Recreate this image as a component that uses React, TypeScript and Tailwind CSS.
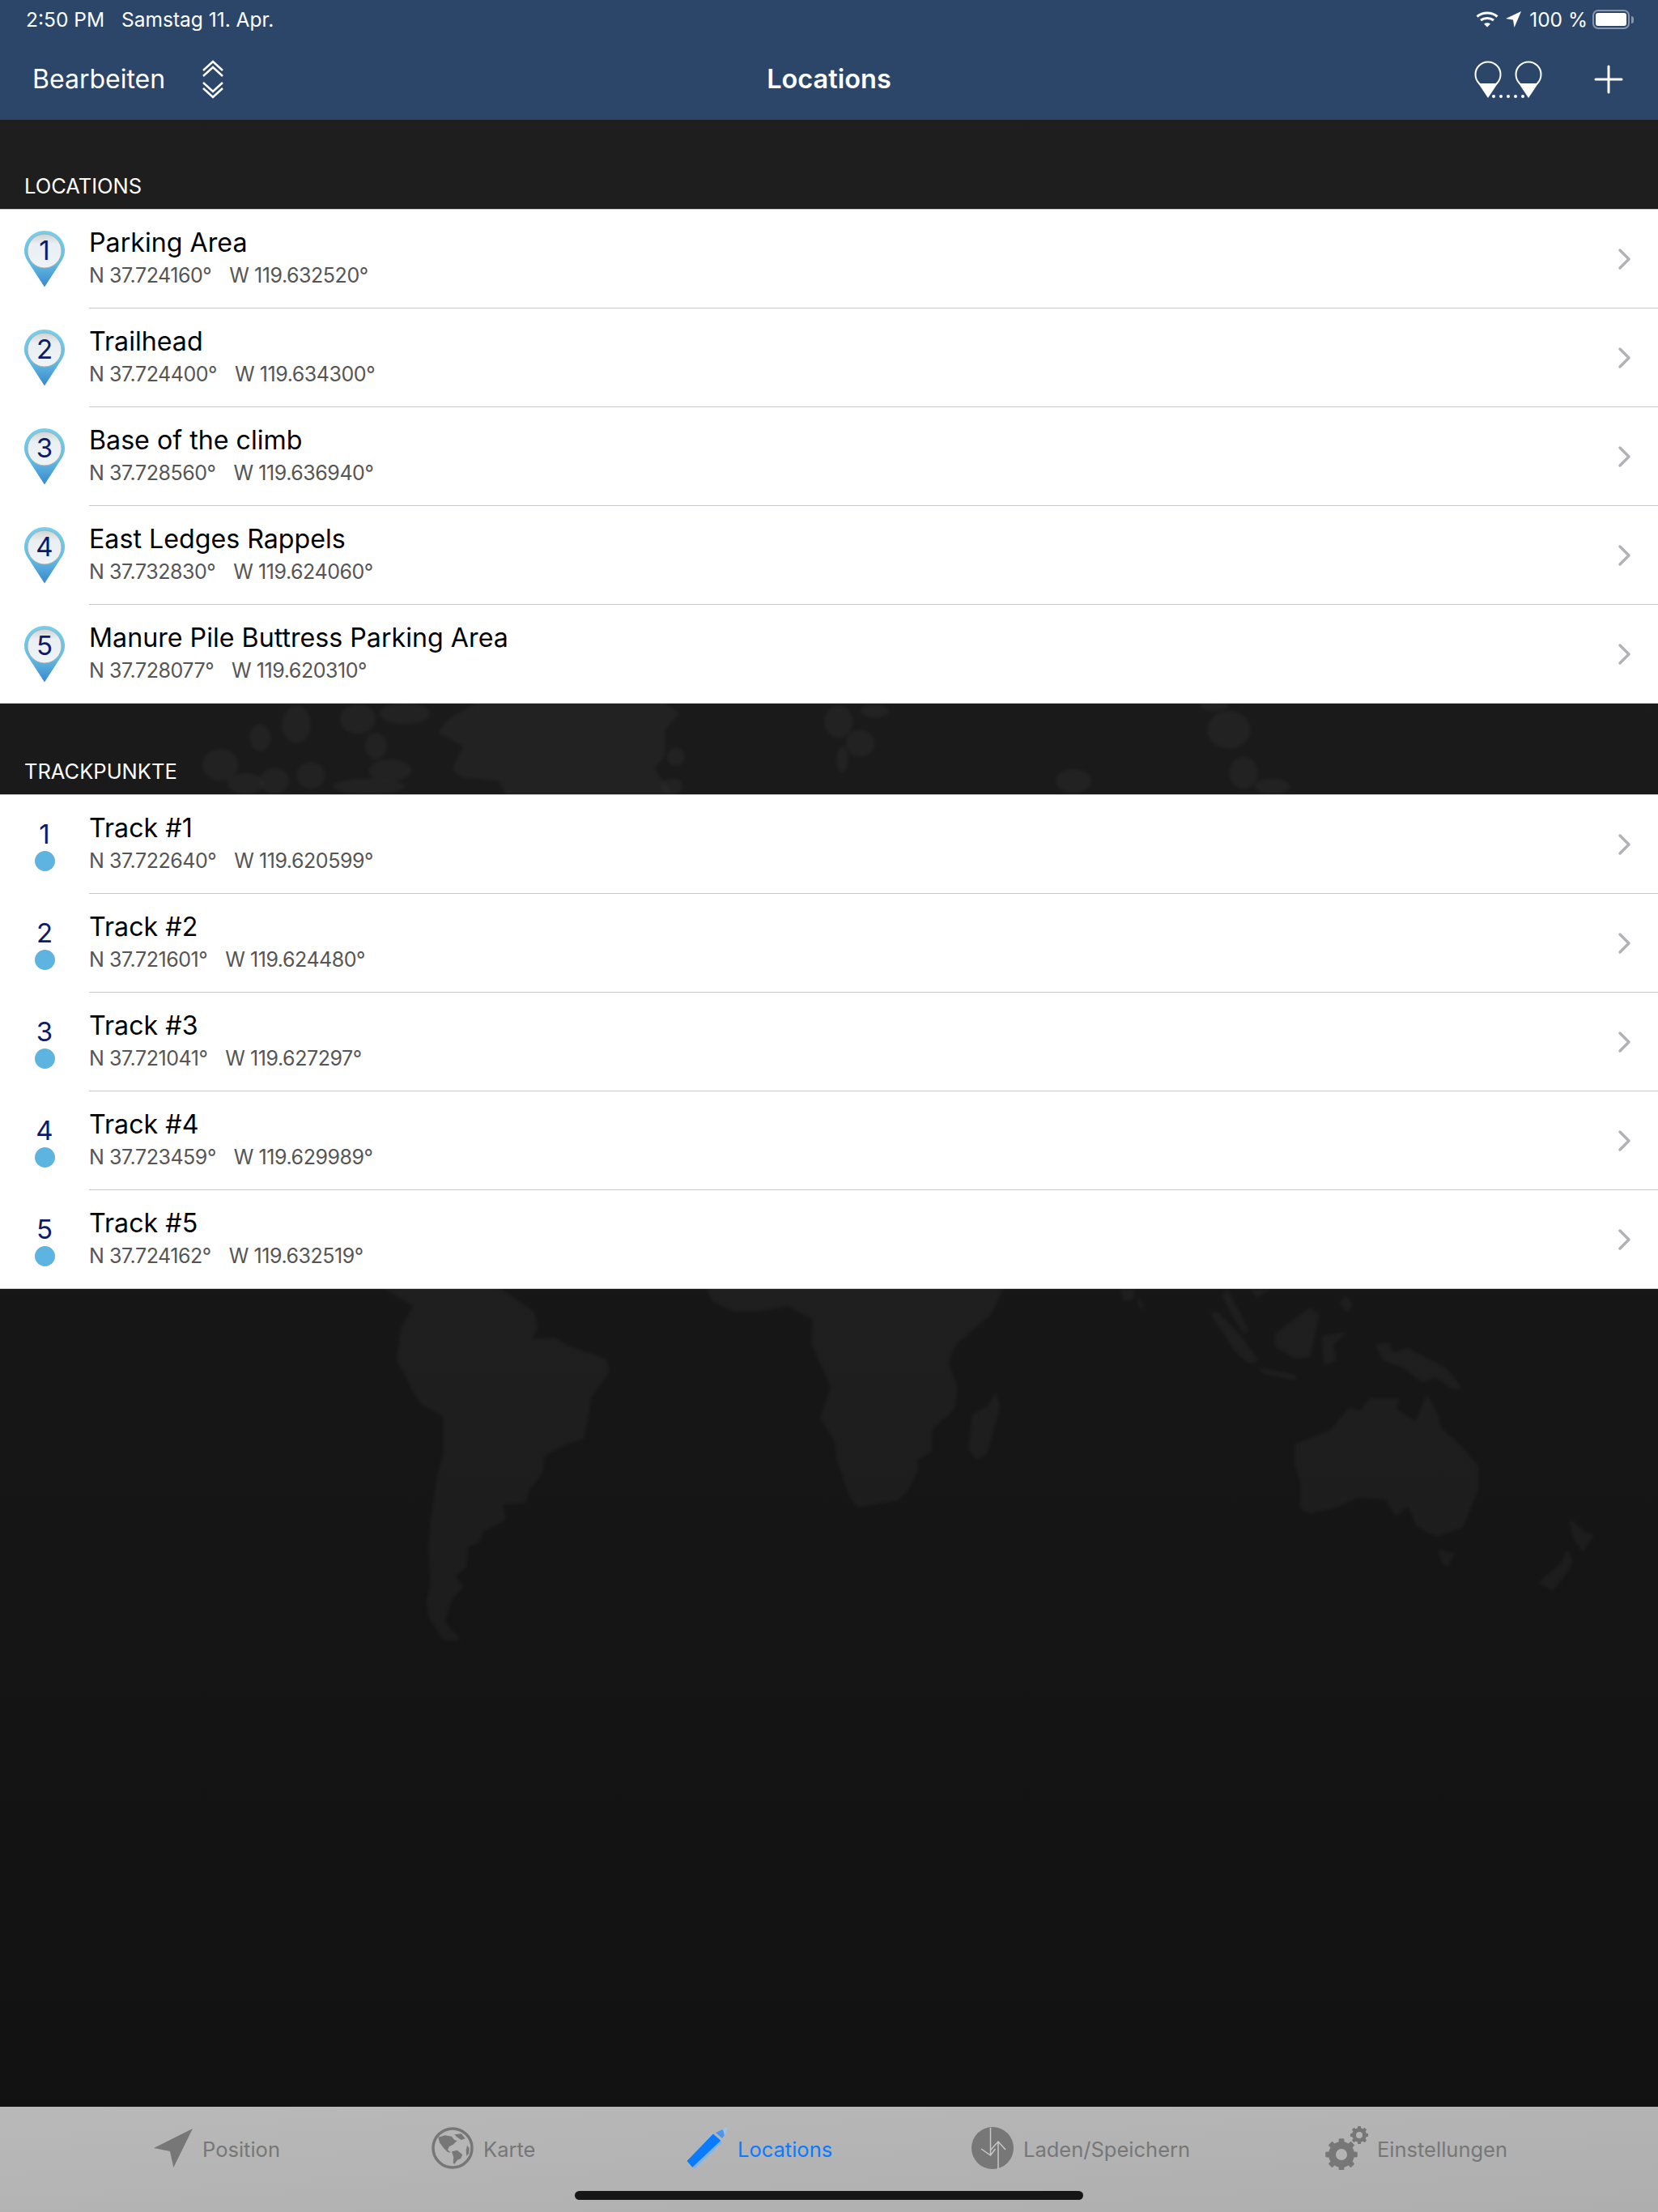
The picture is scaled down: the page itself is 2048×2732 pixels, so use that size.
const locations = [
  { name: 'Parking Area', lat: 'N 37.724160°', lon: 'W 119.632520°' },
  { name: 'Trailhead', lat: 'N 37.724400°', lon: 'W 119.634300°' },
  { name: 'Base of the climb', lat: 'N 37.728560°', lon: 'W 119.636940°' },
  { name: 'East Ledges Rappels', lat: 'N 37.732830°', lon: 'W 119.624060°' },
  { name: 'Manure Pile Buttress Parking Area', lat: 'N 37.728077°', lon: 'W 119.620310°' },
];

const tracks = [
  { name: 'Track #1', lat: 'N 37.722640°', lon: 'W 119.620599°' },
  { name: 'Track #2', lat: 'N 37.721601°', lon: 'W 119.624480°' },
  { name: 'Track #3', lat: 'N 37.721041°', lon: 'W 119.627297°' },
  { name: 'Track #4', lat: 'N 37.723459°', lon: 'W 119.629989°' },
  { name: 'Track #5', lat: 'N 37.724162°', lon: 'W 119.632519°' },
];

function WorldMap() {
  const blobs = [
    [80, 130, 15, 50], [25, 230, 25, 60], [130, 80, 20, 70], [215, 60, 25, 55], [280, 40, 35, 40],
    [240, 160, 15, 50], [260, 250, 30, 40], [100, 290, 20, 50], [150, 270, 20, 50], [230, 310, 50, 30],
    [60, 300, 25, 40], [880, 70, 20, 60], [910, 150, 20, 50], [930, 30, 20, 25], [885, 210, 8, 50],
    [1420, 100, 30, 70], [1440, 260, 20, 60], [1480, 310, 25, 30], [1205, 290, 25, 45], [1400, 10, 20, 20],
    [655, 200, 12, 35], [650, 310, 15, 30],
  ];
  return (
    <svg className="absolute inset-0 blur-[2px]" width="2048" height="2732" viewBox="0 0 2048 2732" fill="#ffffff" fillOpacity="0.035">
      {/* arctic, only seen in the gap between the two lists */}
      <g transform="translate(250 868) scale(0.893 0.3333)">
        <polygon points="380,0 640,0 660,40 640,100 640,200 625,240 650,340 420,340 410,290 360,280 345,250 360,160 325,110 340,60" />
        {blobs.map(([cx, cy, rx, ry], i) => (
          <ellipse key={i} cx={cx} cy={cy} rx={rx} ry={ry} />
        ))}
      </g>
      {/* south america, africa, madagascar */}
      <g transform="translate(440 1590) scale(0.523 0.3333)">
        <polygon points="60,0 340,0 420,90 430,150 415,190 470,185 500,215 590,265 600,310 555,410 540,560 500,580 445,625 440,690 410,750 400,800 345,805 355,860 300,905 290,950 265,960 260,1040 235,1070 255,1110 225,1160 210,1240 250,1310 205,1310 170,1220 165,1170 175,1100 170,960 175,870 190,700 205,620 205,480 150,430 95,270 105,150 135,70" />
        <polygon points="825,0 1530,0 1500,100 1415,215 1400,280 1420,370 1415,450 1360,530 1360,610 1325,640 1330,670 1305,750 1280,790 1185,815 1165,780 1135,640 1130,570 1095,485 1120,370 1075,210 1078,120 1020,70 950,90 890,90 840,50" />
        <polygon points="1510,390 1522,440 1490,620 1465,640 1445,600 1455,470 1490,440" />
      </g>
      {/* australia, indonesia, new zealand */}
      <g transform="translate(1240 1590) scale(0.4847 0.3333)">
        <polygon points="740,580 830,530 880,445 910,455 930,410 1010,410 1000,450 1050,495 1078,390 1110,480 1115,520 1160,580 1210,660 1210,750 1170,890 1100,925 1050,885 1030,810 1000,850 970,785 900,780 850,815 780,840 755,820 755,730 740,650" />
        <polygon points="1105,970 1150,985 1130,1040 1115,1020" />
        <polygon points="1440,850 1480,905 1505,915 1475,985 1450,930" />
        <polygon points="1435,970 1450,1010 1440,1050 1400,1125 1360,1095 1420,1020" />
        <polygon points="945,210 985,205 990,240 1030,225 1130,300 1170,380 1140,375 1100,335 1065,355 1020,300 965,270" />
        <polygon points="525,95 545,90 610,190 650,270 625,285 590,240" />
        <polygon points="555,30 570,5 625,160 610,170 580,100" />
        <polygon points="645,295 745,325 745,345 660,320" />
        <polygon points="690,170 780,75 805,100 780,260 740,265 690,220" />
        <polygon points="810,180 875,165 840,215 850,270 815,290" />
        <polygon points="870,30 890,60 875,95 855,60" />
        <polygon points="295,5 335,5 330,45 305,50" />
        <polygon points="340,30 358,70 345,85" />
        <polygon points="625,5 680,5 645,40" />
      </g>
    </svg>
  );
}

function PinIcon({ n }: { n: number }) {
  return (
    <div className="relative w-[50px] h-[70px]">
      <svg width="50" height="70" viewBox="0 0 50 70">
        <defs>
          <linearGradient id="pinBody" x1="0" y1="0" x2="0" y2="1">
            <stop offset="0" stopColor="#74d0ea" />
            <stop offset="0.55" stopColor="#62bfe6" />
            <stop offset="1" stopColor="#3c86cb" />
          </linearGradient>
          <linearGradient id="pinDisc" x1="0" y1="0" x2="0" y2="1">
            <stop offset="0" stopColor="#cfd3d4" />
            <stop offset="0.3" stopColor="#e9eff2" />
            <stop offset="1" stopColor="#eef3f6" />
          </linearGradient>
        </defs>
        <path d="M25 0C11.2 0 0 11 0 24.5c0 4.4 1.1 8 3.2 11.5L25 69.5 46.8 36C48.900 32.500 50 28.900 50 24.500 50 11 38.800 0 25 0Z" fill="url(#pinBody)" />
        <circle cx="25" cy="25" r="21" fill="url(#pinDisc)" stroke="#a9aeb1" strokeWidth="1" />
      </svg>
      <span className="absolute left-0 right-0 top-[2px] text-center text-[33px] leading-[44px] text-[#101a66]">{n}</span>
    </div>
  );
}

function TrackIcon({ n }: { n: number }) {
  return (
    <div className="flex flex-col items-center w-[50px]">
      <span className="text-[33px] leading-[40px] text-[#101a66]">{n}</span>
      <span className="mt-[1px] w-[25px] h-[25px] rounded-full bg-[#5db4e0]" />
    </div>
  );
}

function Row({ icon, name, lat, lon, last }: { icon: React.ReactNode; name: string; lat: string; lon: string; last: boolean }) {
  return (
    <div className={`flex bg-white ${last ? 'h-[121px]' : 'h-[122px]'}`}>
      <div className="w-[110px] shrink-0 flex justify-center items-center">{icon}</div>
      <div className={`flex-1 flex items-center pr-[32px] ${last ? '' : 'border-b border-[#c8c8cc]'}`}>
        <div className="flex-1 pb-[3px]">
          <div className="text-[32.2px] leading-[40px] text-black">{name}</div>
          <div className="flex gap-[22px] text-[25px] leading-[32px] mt-[4px] text-[#555555] tracking-[-0.45px]">
            <span>{lat}</span>
            <span>{lon}</span>
          </div>
        </div>
        <svg width="18" height="28" viewBox="0 0 18 28" fill="none" stroke="#b2b2b6" strokeWidth="3.500" strokeLinecap="round" strokeLinejoin="round">
          <path d="M3 3l11 11L3 25" />
        </svg>
      </div>
    </div>
  );
}

function Section({ title, top, children }: { title: string; top: string; children: React.ReactNode }) {
  return (
    <section>
      <div className={`${top} flex items-end pl-[30px] pb-[12px] border-b border-[#cfcfcf]`}>
        <span className="text-[25.5px] leading-[32px] text-white">{title}</span>
      </div>
      {children}
      <div className="h-px bg-[#cfcfcf]" />
    </section>
  );
}

function GlobeIcon() {
  return (
    <svg width="52" height="52" viewBox="0 0 52 52" fill="#777777">
      <circle cx="26" cy="26" r="24" fill="none" stroke="#777777" strokeWidth="3.500" />
      <polygon points="8.300,12.700 16.700,10.300 25,11.700 28.300,16 31.700,17 26.700,21.700 21.700,24.300 20,28.300 24,31.700 20,31 15,26 10,19.300" />
      <polygon points="28.300,9.300 36.700,8.300 41.700,14.300 36.700,16 31.700,12.700" />
      <polygon points="25,30.300 31.700,28.700 38.300,34.300 36,39 31.700,41 28.300,46 26.700,44.300 27.300,37.700" />
      <polygon points="44,22.700 46.700,26 46,32.700 43.300,36 42.700,29" />
    </svg>
  );
}

function PencilIcon() {
  return (
    <svg width="52" height="52" viewBox="0 0 52 52">
      <path d="M1 42L33 9l9 8L8 50z" fill="#0a7aff" stroke="#0a7aff" strokeLinejoin="round" />
      <path d="M42 17l2 2-34 33-3-2z" fill="#7db3f2" />
      <path d="M36 7l9-4 2 7-3 4z" fill="#4a95f0" />
      <path d="M45 3l6-3-4 10z" fill="#9cc4f5" />
    </svg>
  );
}

function TransferIcon() {
  return (
    <svg width="52" height="52" viewBox="0 0 52 52">
      <circle cx="26" cy="26" r="26" fill="#777777" />
      <path d="M23.500 1v34M12 27l11.500 8 6-8" fill="none" stroke="#c8c8c8" strokeWidth="1.500" />
      <path d="M33 52V18M24 28l9-10 9 10" fill="none" stroke="#c8c8c8" strokeWidth="1.500" />
    </svg>
  );
}

function Gear({ cx, cy, r, hole, teeth }: { cx: number; cy: number; r: number; hole: number; teeth: number }) {
  const marks = Array.from({ length: teeth }, (_, i) => (i * 360) / teeth);
  return (
    <g>
      {marks.map((a) => (
        <rect key={a} x={cx - r * 0.2} y={cy - r * 1.22} width={r * 0.4} height={r * 2.44} rx={r * 0.06} transform={`rotate(${a} ${cx} ${cy})`} />
      ))}
      <circle cx={cx} cy={cy} r={r} />
      <circle cx={cx} cy={cy} r={hole} fill="#b4b4b4" />
    </g>
  );
}

function GearsIcon() {
  return (
    <svg width="54" height="54" viewBox="0 0 54 54" fill="#777777">
      <Gear cx={20} cy={35} r={16} hole={7} teeth={8} />
      <Gear cx={42} cy={11} r={9} hole={4} teeth={8} />
    </svg>
  );
}

function Tab({ width, icon, label, active, gap }: { width: string; icon: React.ReactNode; label: string; active?: boolean; gap: string }) {
  return (
    <div className={`${width} ${gap} shrink-0 h-[54px] flex items-center`}>
      {icon}
      <span className={`mt-[4px] text-[25.5px] ${active ? 'text-[#0a7aff]' : 'text-[#777777]'}`}>{label}</span>
    </div>
  );
}

export default function App() {
  return (
    <div className="relative w-[2048px] h-[2732px] flex flex-col overflow-hidden bg-gradient-to-b from-[#1f1f1f] to-[#111111] font-['Inter',sans-serif]">
      <WorldMap />

      <header className="relative h-[148px] shrink-0 bg-[#2b4669] text-white">
        <div className="h-[48px] flex items-center justify-between pl-[32px] pr-[30px] text-[24.5px]">
          <div className="flex gap-[21px]">
            <span>2:50 PM</span>
            <span>Samstag 11. Apr.</span>
          </div>
          <div className="flex items-center">
            <svg width="28" height="20" viewBox="0 0 28 20" fill="none" stroke="#ffffff" strokeWidth="3">
              <path d="M1.500 6.500c7-6 18-6 25 0" />
              <path d="M6 11c4.500-3.500 11.500-3.500 16 0" />
              <path d="M14 19.500l-4-4c2.300-1.700 5.700-1.700 8 0z" fill="#ffffff" stroke="none" />
            </svg>
            <svg className="ml-[9px]" width="19" height="20" viewBox="0 0 19 20" fill="#ffffff">
              <path d="M19 0L0 9l9 1.500L10.500 20z" />
            </svg>
            <span className="ml-[10px]">100 %</span>
            <div className="ml-[6px] w-[46px] h-[24px] rounded-[7px] border-2 border-[#ffffff70] p-[2px]">
              <div className="w-full h-full rounded-[3px] bg-white" />
            </div>
            <div className="ml-[2px] w-[3px] h-[9px] rounded-r-full bg-[#ffffff70]" />
          </div>
        </div>
        <div className="relative h-[100px] flex items-center pl-[40px] pr-[43px]">
          <span className="text-[32px]">Bearbeiten</span>
          <svg className="ml-[46px]" width="26" height="48" viewBox="0 0 26 48" fill="none" stroke="#ffffff" strokeWidth="2.500">
            <path d="M1 13L13 2l12 11M1 20L13 9l12 11" />
            <path d="M1 28l12 11 12-11M1 35l12 11 12-11" />
          </svg>
          <span className="absolute left-0 right-0 text-center text-[32.5px] font-semibold">Locations</span>
          <svg className="ml-auto" width="84" height="46" viewBox="0 0 84 46">
            <g fill="none" stroke="#ffffff" strokeWidth="2">
              <circle cx="17" cy="17" r="15.500" />
              <circle cx="67" cy="17" r="15.500" />
            </g>
            <path d="M5 28h24L17 46zM55 28h24L67 46z" fill="#ffffff" />
            <g fill="#ffffff">
              <circle cx="24" cy="44" r="2" />
              <circle cx="33" cy="44" r="2" />
              <circle cx="42" cy="44" r="2" />
              <circle cx="51" cy="44" r="2" />
              <circle cx="60" cy="44" r="2" />
            </g>
          </svg>
          <svg className="ml-[64px]" width="36" height="36" viewBox="0 0 36 36" stroke="#ffffff" strokeWidth="3" strokeLinecap="round">
            <path d="M18 2v32M2 18h32" />
          </svg>
        </div>
      </header>

      <div className="relative flex-1">
        <Section title="LOCATIONS" top="h-[111px]">
          {locations.map((l, i) => (
            <Row key={l.name} icon={<PinIcon n={i + 1} />} name={l.name} lat={l.lat} lon={l.lon} last={i === 4} />
          ))}
        </Section>
        <Section title="TRACKPUNKTE" top="h-[113px]">
          {tracks.map((t, i) => (
            <Row key={t.name} icon={<TrackIcon n={i + 1} />} name={t.name} lat={t.lat} lon={t.lon} last={i === 4} />
          ))}
        </Section>
      </div>

      <footer className="relative h-[130px] shrink-0 bg-gradient-to-br from-[#b9b9b9] to-[#aeaeae] pt-[24px] pl-[190px] flex items-start">
        <Tab width="w-[343px]" gap="gap-[12px]" label="Position" icon={
          <svg width="48" height="48" viewBox="0 0 48 48" fill="#777777"><path d="M48 0L0 24l20 4 4.300 20z" /></svg>
        } />
        <Tab width="w-[315px]" gap="gap-[12px]" label="Karte" icon={<GlobeIcon />} />
        <Tab width="w-[352px]" gap="gap-[11px]" label="Locations" active icon={<PencilIcon />} />
        <Tab width="w-[437px]" gap="gap-[12px]" label="Laden/Speichern" icon={<TransferIcon />} />
        <Tab width="w-[240px]" gap="gap-[10px]" label="Einstellungen" icon={<GearsIcon />} />
        <div className="absolute left-[710px] bottom-[15px] w-[628px] h-[11px] rounded-full bg-[#161616]" />
      </footer>
    </div>
  );
}
